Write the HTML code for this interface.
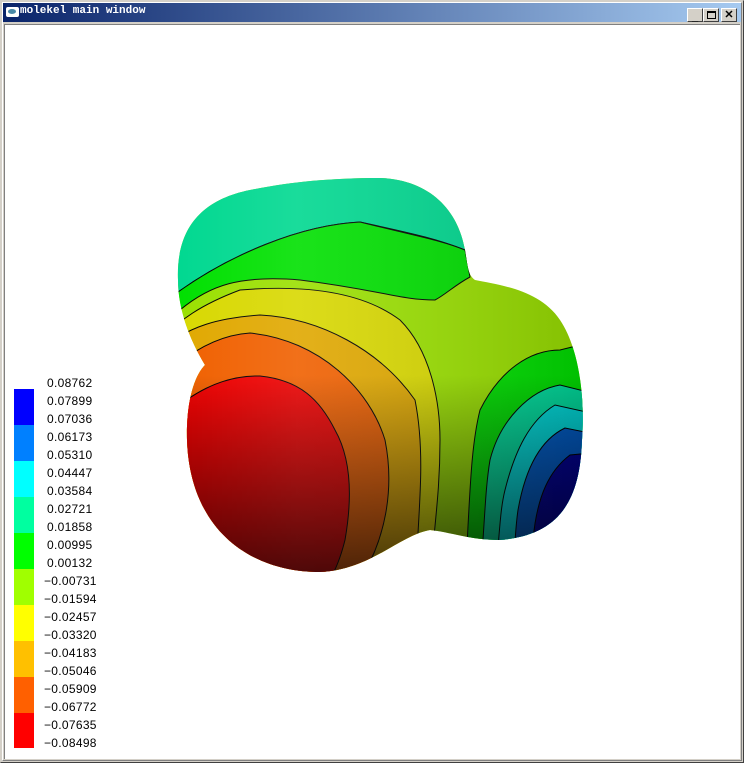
<!DOCTYPE html>
<html><head><meta charset="utf-8"><style>
*{margin:0;padding:0;box-sizing:border-box}
body{width:744px;height:763px;background:#d4d0c8;position:relative;overflow:hidden;font-family:"Liberation Sans",sans-serif}
.frame{position:absolute;left:0;top:0;width:744px;height:763px;border-top:1px solid #d4d0c8;border-left:1px solid #d4d0c8;border-right:1px solid #404040;border-bottom:1px solid #404040}
.frame2{position:absolute;left:1px;top:1px;right:1px;bottom:1px;border-top:1px solid #fff;border-left:1px solid #fff;border-right:1px solid #808080;border-bottom:1px solid #808080}
.title{position:absolute;left:3px;top:3px;width:738px;height:19px;background:linear-gradient(to right,#0a246a,#a6caf0)}
.title span{position:absolute;left:17px;top:2px;color:#fff;font:bold 11px "Liberation Mono",monospace;letter-spacing:0px}
.ico{position:absolute;left:3px;top:4px;width:13px;height:10px;background:#fff;border-radius:2px}
.ico:after{content:"";position:absolute;left:2px;top:2px;width:8px;height:5px;border-radius:50%;background:#4a8aa8}
.btn{position:absolute;top:5px;width:16px;height:14px;background:#d4d0c8;border-top:1px solid #fff;border-left:1px solid #fff;border-right:1px solid #404040;border-bottom:1px solid #404040;font:bold 11px "Liberation Sans",sans-serif;text-align:center;line-height:12px;color:#000}
.client{position:absolute;left:4px;top:24px;width:736px;height:735px;background:#fff;border-top:1px solid #808080;border-left:1px solid #808080}
.leg{position:absolute;left:14px;width:20px}
.lbl{position:absolute;left:44px;font-size:12px;color:#000;line-height:14px;letter-spacing:0.3px}
</style></head><body>
<div class="frame"><div class="frame2"></div></div>
<div class="title"><div class="ico"></div><span>molekel main window</span>
<div class="btn" style="left:684px;line-height:16px">_</div>
<div class="btn" style="left:700px"><div style="position:absolute;left:3px;top:2px;width:9px;height:8px;border:1px solid #000;border-top-width:2px"></div></div>
<div class="btn" style="left:718px">✕</div>
</div>
<div class="client"></div>
<div class="leg" style="top:389px;height:36px;background:#0000ff"></div>
<div class="leg" style="top:425px;height:36px;background:#0080ff"></div>
<div class="leg" style="top:461px;height:36px;background:#00ffff"></div>
<div class="leg" style="top:497px;height:36px;background:#00ffa0"></div>
<div class="leg" style="top:533px;height:36px;background:#00ff00"></div>
<div class="leg" style="top:569px;height:36px;background:#a0ff00"></div>
<div class="leg" style="top:605px;height:36px;background:#ffff00"></div>
<div class="leg" style="top:641px;height:36px;background:#ffc000"></div>
<div class="leg" style="top:677px;height:36px;background:#ff6000"></div>
<div class="leg" style="top:713px;height:35px;background:#ff0000"></div>
<div style="position:absolute;left:0;top:0">
<div class="lbl" style="top:376px;left:47px">0.08762</div>
<div class="lbl" style="top:394px;left:47px">0.07899</div>
<div class="lbl" style="top:412px;left:47px">0.07036</div>
<div class="lbl" style="top:430px;left:47px">0.06173</div>
<div class="lbl" style="top:448px;left:47px">0.05310</div>
<div class="lbl" style="top:466px;left:47px">0.04447</div>
<div class="lbl" style="top:484px;left:47px">0.03584</div>
<div class="lbl" style="top:502px;left:47px">0.02721</div>
<div class="lbl" style="top:520px;left:47px">0.01858</div>
<div class="lbl" style="top:538px;left:47px">0.00995</div>
<div class="lbl" style="top:556px;left:47px">0.00132</div>
<div class="lbl" style="top:574px">−0.00731</div>
<div class="lbl" style="top:592px">−0.01594</div>
<div class="lbl" style="top:610px">−0.02457</div>
<div class="lbl" style="top:628px">−0.03320</div>
<div class="lbl" style="top:646px">−0.04183</div>
<div class="lbl" style="top:664px">−0.05046</div>
<div class="lbl" style="top:682px">−0.05909</div>
<div class="lbl" style="top:700px">−0.06772</div>
<div class="lbl" style="top:718px">−0.07635</div>
<div class="lbl" style="top:736px">−0.08498</div>
</div>
<svg style="position:absolute;left:0;top:0" width="744" height="763">
<defs>
<clipPath id="s"><path d="M178 280 C176 230,200 200,250 190 C290 182,330 178,380 178 C430 180,458 210,465 250 C468 268,468 275,475 280 C500 285,540 290,560 320 C580 350,585 400,582 440 C580 500,560 535,500 540 C470 540,450 532,430 530 C400 535,370 570,320 572 C250 572,190 530,187 440 C186 400,195 375,205 365 C190 340,178 310,178 280 Z"/></clipPath>
<linearGradient id="sh2" x1="0" y1="0" x2="0" y2="1"><stop offset="0.5" stop-color="#000" stop-opacity="0"/><stop offset="1" stop-color="#000" stop-opacity="0.7"/></linearGradient>
<linearGradient id="sh3" x1="0" y1="0" x2="1" y2="0"><stop offset="0" stop-color="#fff" stop-opacity="0"/><stop offset="0.3" stop-color="#fff" stop-opacity="0.1"/><stop offset="1" stop-color="#000" stop-opacity="0.15"/></linearGradient>
</defs>
<g clip-path="url(#s)" stroke="#000" stroke-width="1">
<rect x="170" y="170" width="420" height="410" fill="#9ae000" stroke="none"/>
<path d="M170 170 L600 170 L600 255 L465 250 C440 240,420 235,360 222 C300 225,230 255,178 292 L170 300 Z" fill="#00d890"/>
<path d="M178 292 C230 255,300 225,360 222 C420 237,440 240,465 250 L470 277 C455 285,445 295,435 300 C400 300,380 290,300 280 C240 275,210 285,180 310 L170 330 Z" fill="#00e000"/>
<path d="M160 340 C180 320,200 305,240 290 C300 285,360 290,400 320 C430 350,440 400,440 440 C440 490,435 520,430 580 L160 580 Z" fill="#d8d800"/>
<path d="M160 350 C190 325,220 318,260 315 C320 318,380 350,415 400 C425 450,420 500,415 580 L160 580 Z" fill="#e0a800"/>
<path d="M160 380 C190 350,220 335,250 333 C320 340,370 390,385 440 C395 490,385 540,360 580 L160 580 Z" fill="#f06000"/>
<path d="M160 420 C190 395,220 375,260 376 C300 380,320 400,335 430 C352 460,352 500,345 540 C340 560,335 570,330 580 L160 580 Z" fill="#f00000"/>
<path d="M600 340 L560 350 C530 350,500 370,480 410 C470 450,470 500,465 580 L600 580 Z" fill="#00e000"/>
<path d="M600 395 L560 385 C530 390,500 420,490 460 C485 490,485 520,480 580 L600 580 Z" fill="#00e0a0"/>
<path d="M600 415 L555 405 C530 420,515 450,505 490 C500 510,500 530,495 580 L600 580 Z" fill="#00e0e0"/>
<path d="M600 435 L565 428 C540 440,525 470,518 510 C515 530,515 550,512 580 L600 580 Z" fill="#0060d0"/>
<path d="M600 452 L570 455 C550 470,537 495,533 540 L530 580 L600 580 Z" fill="#0000a0"/>
<rect x="170" y="170" width="420" height="410" fill="url(#sh3)" stroke="none"/>
<rect x="170" y="170" width="420" height="410" fill="url(#sh2)" stroke="none"/>
</g>
</svg>
</body></html>
